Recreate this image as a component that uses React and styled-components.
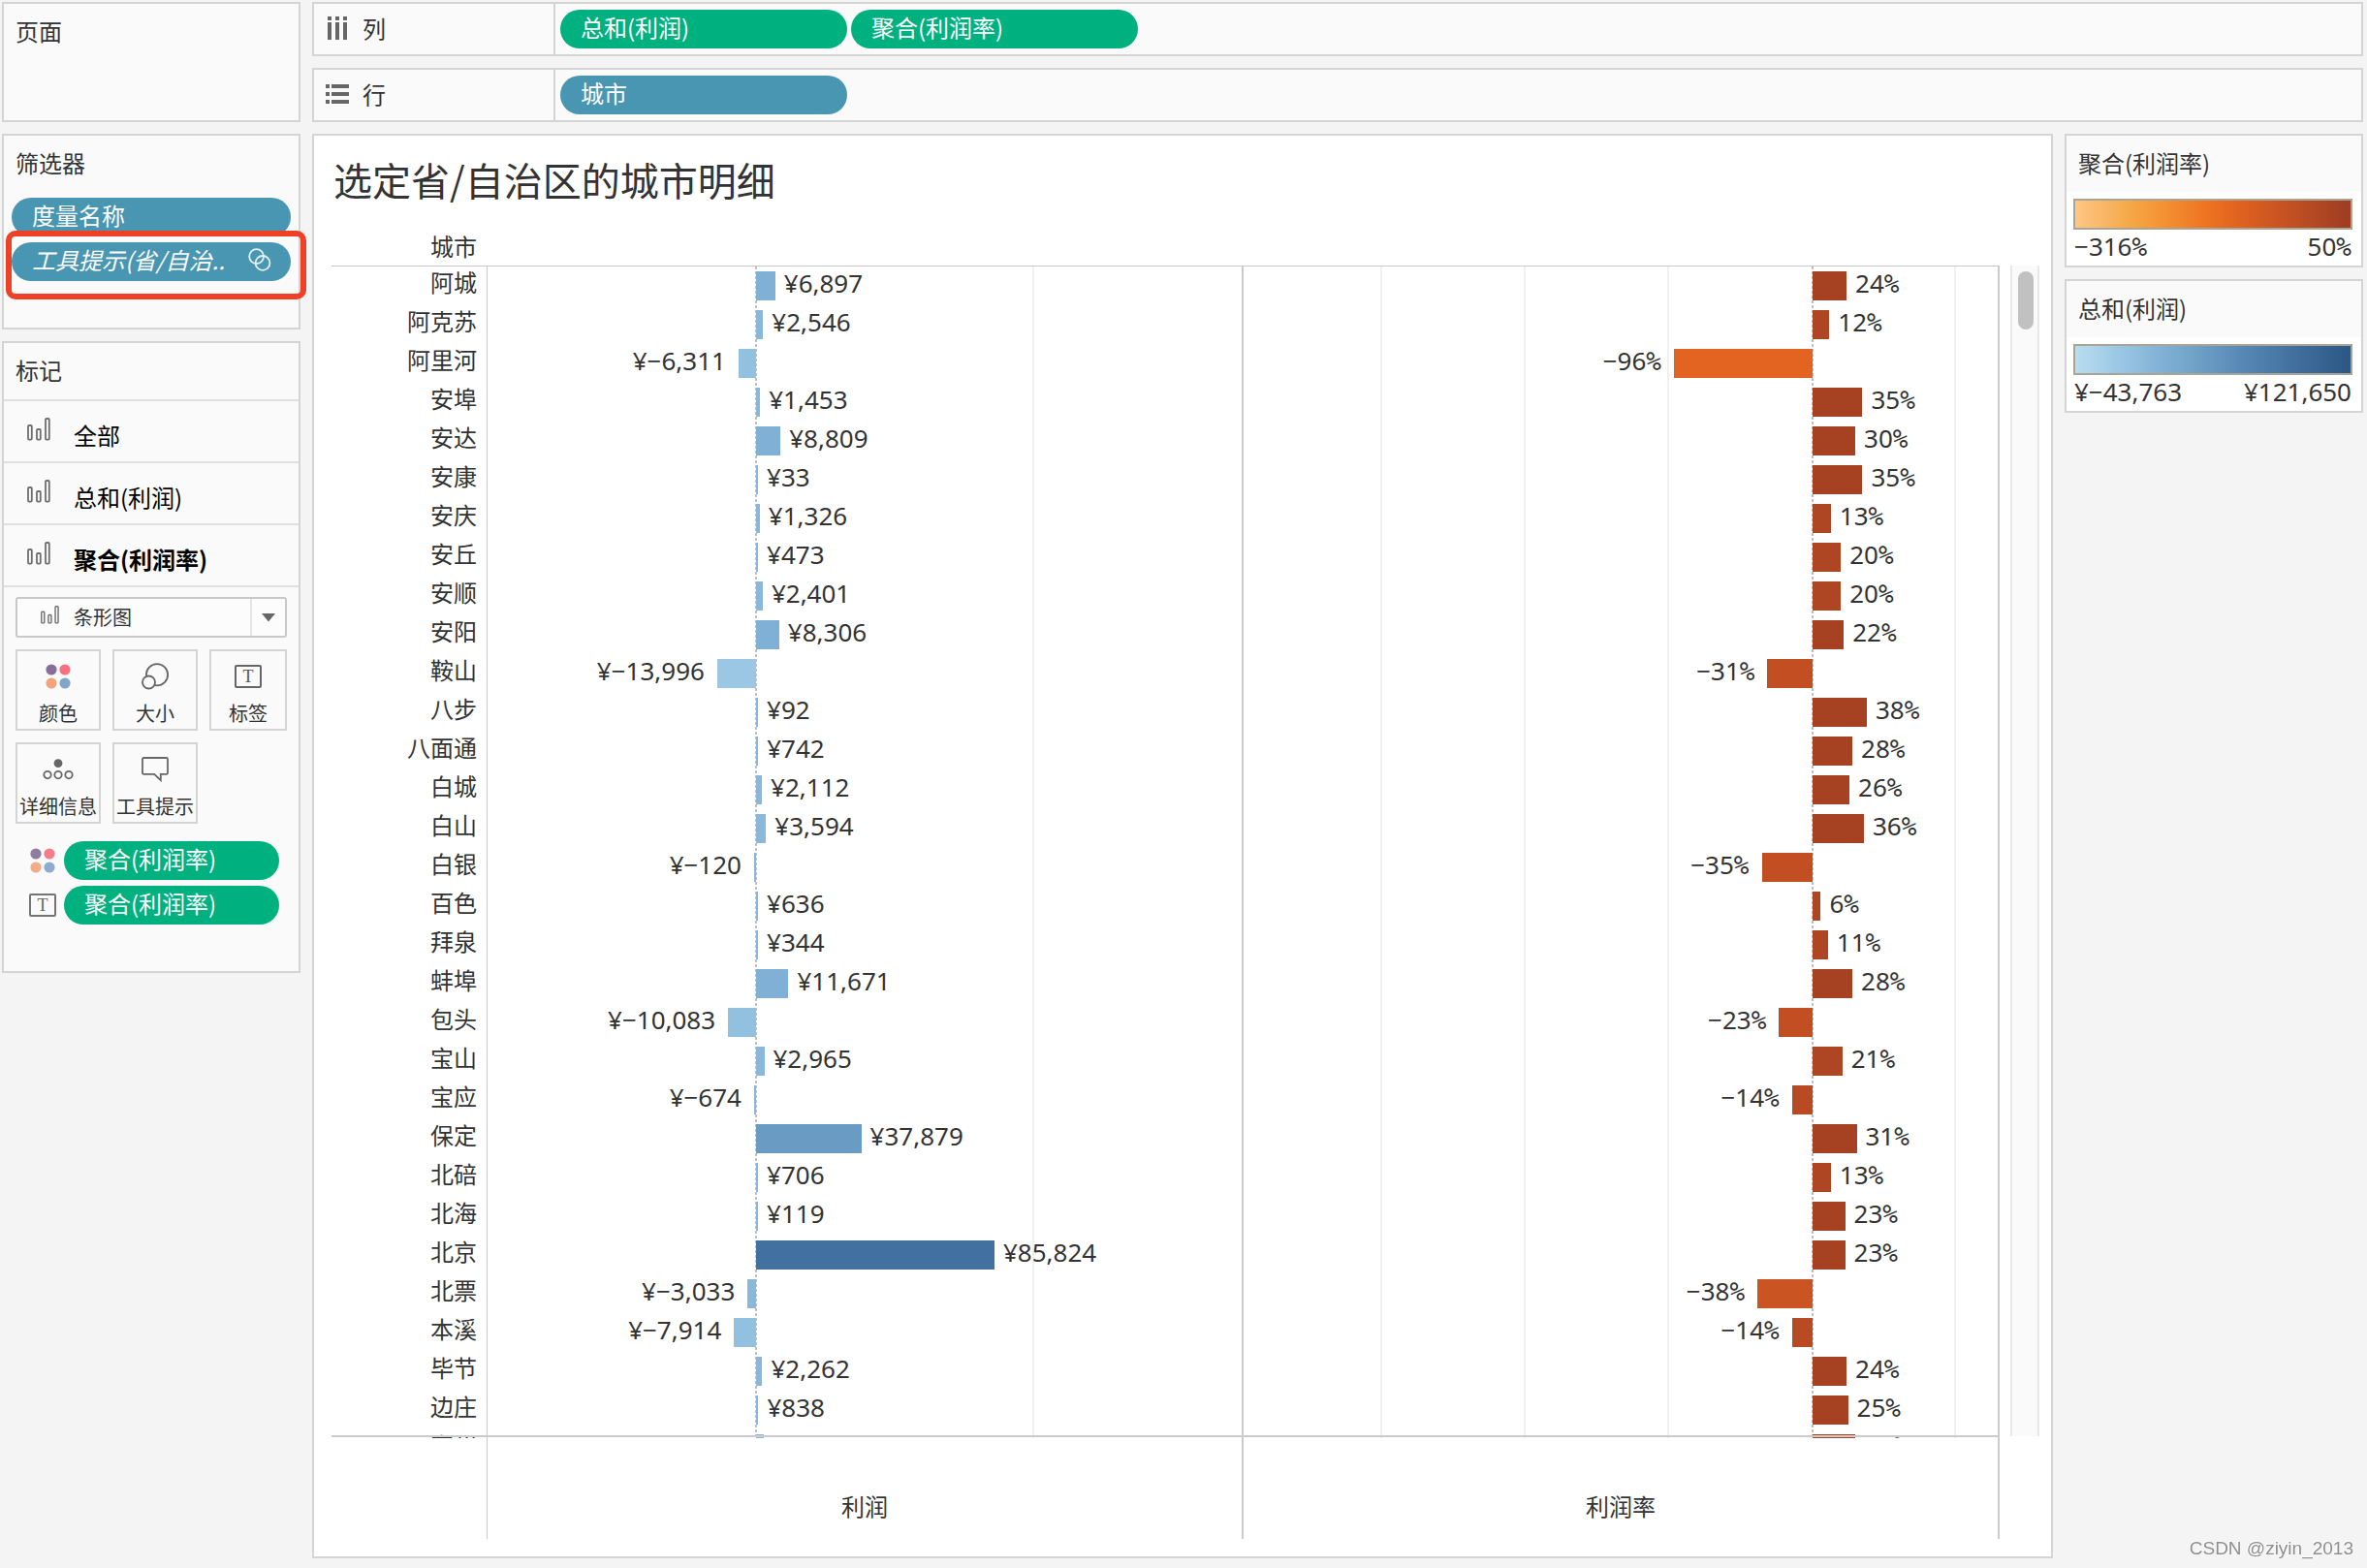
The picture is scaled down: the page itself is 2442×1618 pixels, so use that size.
import React, { useState } from 'react';
import styled, { createGlobalStyle } from 'styled-components';

const GREEN = '#00b180';
const BLUE = '#4996b2';

const ORANGE_RAMP = [
    '#ffc685', '#fcbe75', '#f9b665', '#f7ae54', '#f5a645', '#f59c3c', '#f49234',
    '#f2882d', '#f07e27', '#ee7422', '#e96b20', '#e36420', '#db5e20', '#d25921',
    '#ca5422', '#c14f22', '#b84b23', '#af4623', '#a64122', '#9e3d22',
];
const BLUE_RAMP = [
    '#b9ddf1', '#afd6ed', '#a5cfe9', '#9bc7e4', '#92c0df', '#89b8da', '#80b0d5',
    '#79aacf', '#72a3c9', '#6a9bc3', '#6394be', '#5b8cb8', '#5485b2', '#4e7fac',
    '#4878a6', '#42719f', '#3d6a98', '#376491', '#305d8a', '#2a5783',
];

// min / max is what the pane covers, base is where the bars start,
// low / high is the range of the colour legend
const PROFIT = { min: -96650, max: 174800, base: 0, low: -43763, high: 121650, ramp: BLUE_RAMP, grid: [100000] };
const RATIO = { min: -395, max: 129, base: 0.5, low: -316, high: 50, ramp: ORANGE_RAMP, grid: [-300, -200, -100, 100] };

const CITIES = [
    ['阿城', 6897, 24],
    ['阿克苏', 2546, 12],
    ['阿里河', -6311, -96],
    ['安埠', 1453, 35],
    ['安达', 8809, 30],
    ['安康', 33, 35],
    ['安庆', 1326, 13],
    ['安丘', 473, 20],
    ['安顺', 2401, 20],
    ['安阳', 8306, 22],
    ['鞍山', -13996, -31],
    ['八步', 92, 38],
    ['八面通', 742, 28],
    ['白城', 2112, 26],
    ['白山', 3594, 36],
    ['白银', -120, -35],
    ['百色', 636, 6],
    ['拜泉', 344, 11],
    ['蚌埠', 11671, 28],
    ['包头', -10083, -23],
    ['宝山', 2965, 21],
    ['宝应', -674, -14],
    ['保定', 37879, 31],
    ['北碚', 706, 13],
    ['北海', 119, 23],
    ['北京', 85824, 23],
    ['北票', -3033, -38],
    ['本溪', -7914, -14],
    ['毕节', 2262, 24],
    ['边庄', 838, 25],
    ['宾州', 2700, 30],
];

const position = (axis, value) => ((value - axis.min) / (axis.max - axis.min)) * 100;

const colorOf = (axis, value) => {
    const t = (value - axis.low) / (axis.high - axis.low);
    return axis.ramp[Math.round(t * (axis.ramp.length - 1))];
}

const gridOf = (axis) => {
    const lines = axis.grid.map(v => `linear-gradient(#f0f0f0, #f0f0f0) ${position(axis, v)}% 0 / 2px 100% no-repeat`);
    const zero = `repeating-linear-gradient(#bfbfbf 0 3px, transparent 3px 5px) ${position(axis, axis.base)}% 0 / 2px 100% no-repeat`;
    return [zero, ...lines].join(', ');
}

const money = (value) => `¥${value < 0 ? '−' : ''}${Math.abs(value).toLocaleString('en-US')}`;


const BarsIcon = ({ size = 24 }) => (
    <svg width={size} height={size} viewBox="0 0 24 24" fill="none" stroke="#6e6e6e" strokeWidth="1.8">
        <rect x="1" y="8" width="3.8" height="14.6" rx="1" />
        <rect x="10" y="12" width="3.8" height="10.6" rx="1" />
        <rect x="19" y="1" width="3.8" height="21.6" rx="1" />
    </svg>
)

const ColorIcon = () => (
    <svg width="26" height="26" viewBox="0 0 26 26">
        <circle cx="6" cy="6" r="5.6" fill="#866f98" />
        <circle cx="20" cy="6" r="5.6" fill="#f8707f" />
        <circle cx="6" cy="20" r="5.6" fill="#f2a57b" />
        <circle cx="20" cy="20" r="5.6" fill="#83a4cb" />
    </svg>
)

const SizeIcon = () => (
    <svg width="28" height="28" viewBox="0 0 28 28" fill="#fafafa" stroke="#666" strokeWidth="1.8">
        <circle cx="16" cy="12.2" r="11.1" />
        <circle cx="7.5" cy="20" r="6.5" />
    </svg>
)

const LabelIcon = () => (
    <svg width="28" height="24" viewBox="0 0 28 24">
        <rect x="1" y="1" width="26" height="22" rx="1" fill="none" stroke="#666" strokeWidth="2" />
        <text x="14" y="18" textAnchor="middle" fontFamily="Liberation Serif, serif" fontSize="18" fill="#555">T</text>
    </svg>
)

const DetailIcon = () => (
    <svg width="32" height="22" viewBox="0 0 32 22" fill="none" stroke="#666" strokeWidth="1.8">
        <circle cx="16" cy="4.6" r="4.4" fill="#666" stroke="none" />
        <circle cx="5" cy="16.6" r="3.7" />
        <circle cx="16" cy="16.6" r="3.7" />
        <circle cx="27" cy="16.6" r="3.7" />
    </svg>
)

const TooltipIcon = () => (
    <svg width="28" height="26" viewBox="0 0 28 26" fill="none" stroke="#666" strokeWidth="1.8">
        <path d="M2.4 1h23.2q1.4 0 1.4 1.4v14q0 1.4-1.4 1.4h-5.8v6.4l-6.6-6.4H2.4Q1 17.8 1 16.4v-14Q1 1 2.4 1z" />
    </svg>
)

const LinkedIcon = () => (
    <svg width="24" height="26" viewBox="0 0 24 26" fill="none" stroke="#e4f0f4" strokeWidth="1.8">
        <circle cx="8.6" cy="9.6" r="7.4" />
        <circle cx="15" cy="16.4" r="7.4" />
    </svg>
)

const ColumnsIcon = () => (
    <svg width="24" height="24" viewBox="0 0 24 24" fill="#666">
        <path d="M2 0h4v4H2zM10 0h4v4h-4zM18 0h4v4h-4zM2 6h4v18H2zM10 6h4v18h-4zM18 6h4v18h-4z" />
    </svg>
)

const RowsIcon = () => (
    <svg width="24" height="24" viewBox="0 0 24 24" fill="#666">
        <path d="M0 2h4v4H0zM0 10h4v4H0zM0 18h4v4H0zM6 2h18v4H6zM6 10h18v4H6zM6 18h18v4H6z" />
    </svg>
)


const Pane = ({ axis, value, children }) => {
    const origin = position(axis, axis.base);
    const negative = value < 0;
    // bar length as a share of the half of the pane that it lies in
    const side = negative ? origin : 100 - origin;
    const length = Math.abs(position(axis, value) - origin) / side * 100;

    return (
        <PaneCell $grid={gridOf(axis)}>
            <Track>
                <Side $negative={negative} style={{ width: `${side}%` }}>
                    <Bar style={{ width: `${length}%`, background: colorOf(axis, value) }} />
                    <Value>{children}</Value>
                </Side>
            </Track>
        </PaneCell>
    )
}

const Legend = ({ title, ramp, low, high }) => (
    <Panel>
        <PanelTitle>{title}</PanelTitle>
        <LegendBody>
            <Ramp $colors={ramp} />
            <LegendRange>
                <span>{low}</span>
                <span>{high}</span>
            </LegendRange>
        </LegendBody>
    </Panel>
)

const Percent = ({ value }) => <>{value < 0 ? '−' : ''}{Math.abs(value)}<Sign>%</Sign></>


const App = () => {
    const [card, setCard] = useState('聚合(利润率)');

    return (<>
        <GlobalStyle />
        <Page>
            <Sidebar>
                <Panel $height={124}>
                    <PanelTitle>页面</PanelTitle>
                </Panel>
                <Panel $height={202}>
                    <PanelTitle>筛选器</PanelTitle>
                    <FilterList>
                        <Pill $color={BLUE}>度量名称</Pill>
                        <Pill $color={BLUE} $italic>
                            工具提示(省/自治..
                            <LinkedIcon />
                        </Pill>
                        <Highlight />
                    </FilterList>
                </Panel>
                <Panel>
                    <PanelTitle>标记</PanelTitle>
                    {['全部', '总和(利润)', '聚合(利润率)'].map(name => (
                        <CardRow key={name} $active={name === card} onClick={() => setCard(name)}>
                            <BarsIcon />
                            <CardName>{name}</CardName>
                        </CardRow>
                    ))}
                    <MarksBody>
                        <MarkType>
                            <MarkTypeIcon><BarsIcon size={19} /></MarkTypeIcon>
                            <MarkSelect aria-label="标记类型" defaultValue="条形图">
                                <option>条形图</option>
                            </MarkSelect>
                            <MarkArrow>
                                <svg width="14" height="9" viewBox="0 0 14 9" fill="#666"><path d="M0 0h14L7 8.5z" /></svg>
                            </MarkArrow>
                        </MarkType>
                        <MarkGrid>
                            <MarkButton><MarkIcon><ColorIcon /></MarkIcon>颜色</MarkButton>
                            <MarkButton><MarkIcon><SizeIcon /></MarkIcon>大小</MarkButton>
                            <MarkButton><MarkIcon><LabelIcon /></MarkIcon>标签</MarkButton>
                            <MarkButton><MarkIcon><DetailIcon /></MarkIcon>详细信息</MarkButton>
                            <MarkButton><MarkIcon><TooltipIcon /></MarkIcon>工具提示</MarkButton>
                        </MarkGrid>
                        <Encodings>
                            <Encoding>
                                <ColorIcon />
                                <Pill $color={GREEN}>聚合(利润率)</Pill>
                            </Encoding>
                            <Encoding>
                                <LabelIcon />
                                <Pill $color={GREEN}>聚合(利润率)</Pill>
                            </Encoding>
                        </Encodings>
                    </MarksBody>
                </Panel>
            </Sidebar>

            <Workspace>
                <Shelf>
                    <ShelfName><ColumnsIcon />列</ShelfName>
                    <ShelfPills>
                        <Pill $color={GREEN}>总和(利润)</Pill>
                        <Pill $color={GREEN}>聚合(利润率)</Pill>
                    </ShelfPills>
                </Shelf>
                <Shelf>
                    <ShelfName><RowsIcon />行</ShelfName>
                    <ShelfPills>
                        <Pill $color={BLUE}>城市</Pill>
                    </ShelfPills>
                </Shelf>

                <Content>
                    <Sheet>
                        <SheetTitle>选定省/自治区的城市明细</SheetTitle>
                        <FieldHeader>城市</FieldHeader>
                        <Plot>
                            <Viewport>
                                <Table>
                                    <colgroup>
                                        <CityCol />
                                        <col />
                                        <col />
                                    </colgroup>
                                    <tbody>
                                        {CITIES.map(([city, profit, ratio]) => (
                                            <tr key={city}>
                                                <City scope="row">{city}</City>
                                                <Pane axis={PROFIT} value={profit}>{money(profit)}</Pane>
                                                <Pane axis={RATIO} value={ratio}><Percent value={ratio} /></Pane>
                                            </tr>
                                        ))}
                                    </tbody>
                                </Table>
                            </Viewport>
                            <Scrollbar><Thumb /></Scrollbar>
                        </Plot>
                        <Axes>
                            <AxisCorner />
                            <AxisTitle>利润</AxisTitle>
                            <AxisTitle>利润率</AxisTitle>
                        </Axes>
                    </Sheet>
                    <Legends>
                        <Legend title="聚合(利润率)" ramp={ORANGE_RAMP} low={<Percent value={-316} />} high={<Percent value={50} />} />
                        <Legend title="总和(利润)" ramp={BLUE_RAMP} low={money(-43763)} high={money(121650)} />
                    </Legends>
                </Content>
            </Workspace>
        </Page>
        <Watermark>CSDN @ziyin_2013</Watermark>
    </>)
}


export default App;

const GlobalStyle = createGlobalStyle`
* {
    box-sizing: border-box;
}
body {
    margin: 0;
    background: #f4f4f4;
    color: #333;
    font-family: 'Noto Sans CJK SC', sans-serif;
    font-size: 24px;
    line-height: 32px;
}
button, select {
    font: inherit;
    color: inherit;
}
svg {
    display: block;
    flex: none;
}
`
const Page = styled.div`
display: flex;
gap: 12px;
height: 100vh;
padding: 2px 4px 10px 2px;
`
const Sidebar = styled.aside`
display: flex;
flex-direction: column;
flex: none;
gap: 12px;
width: 308px;
`
const Workspace = styled.main`
display: flex;
flex-direction: column;
flex: 1;
gap: 12px;
min-width: 0;
`
const Panel = styled.section`
min-height: ${p => p.$height ? `${p.$height}px` : '0'};
border: 2px solid #d4d4d4;
background: #fafafa;
`
const PanelTitle = styled.h2`
margin: 0;
padding: 12px 12px 14px;
font-size: 24px;
font-weight: 400;
line-height: 32px;
`
const Pill = styled.button`
display: flex;
align-items: center;
justify-content: space-between;
height: 40px;
padding: 0 20px 4px 21px;
border: none;
border-radius: 20px;
background: ${p => p.$color};
color: white;
font-style: ${p => p.$italic ? 'italic' : 'normal'};
text-align: left;
white-space: nowrap;
`
const FilterList = styled.div`
position: relative;
display: flex;
flex-direction: column;
gap: 6px;
padding: 6px 8px;
`
// red frame drawn over the second filter
const Highlight = styled.div`
position: absolute;
top: 40px;
left: 2px;
right: -8px;
height: 71px;
border: 6px solid #ee4126;
border-radius: 10px;
pointer-events: none;
`
const CardRow = styled.button`
display: flex;
align-items: center;
gap: 24px;
width: 100%;
height: 64px;
padding: 0 24px 4px;
border: none;
border-top: 2px solid #e0e0e0;
background: none;
color: black;
font-weight: ${p => p.$active ? 700 : 400};
`
const CardName = styled.span`
padding-top: 12px;
`
const MarksBody = styled.div`
padding: 10px 12px 48px;
border-top: 2px solid #e0e0e0;
`
const MarkType = styled.div`
position: relative;
width: 280px;
`
const MarkSelect = styled.select`
width: 100%;
height: 42px;
padding: 0 40px 0 58px;
border: 2px solid #c8c8c8;
border-radius: 3px;
background: #fcfcfc;
font-size: 20px;
appearance: none;
`
const MarkTypeIcon = styled.span`
position: absolute;
top: 9px;
left: 26px;
pointer-events: none;
`
const MarkArrow = styled.span`
position: absolute;
top: 2px;
bottom: 2px;
right: 2px;
display: grid;
place-items: center;
width: 36px;
border-left: 2px solid #e4e4e4;
pointer-events: none;
`
const MarkGrid = styled.div`
display: grid;
grid-template-columns: 88px 88px 80px;
gap: 12px;
margin-top: 12px;
`
const MarkButton = styled.button`
display: flex;
flex-direction: column;
align-items: center;
height: 84px;
padding: 0;
border: 2px solid #d4d4d4;
background: #fafafa;
font-size: 20px;
line-height: 26px;
white-space: nowrap;
`
const MarkIcon = styled.span`
display: grid;
place-items: center;
height: 51px;
`
const Encodings = styled.div`
display: flex;
flex-direction: column;
gap: 6px;
margin-top: 18px;
`
const Encoding = styled.div`
display: grid;
grid-template-columns: 28px 222px;
gap: 8px;
align-items: center;
justify-items: center;
padding-left: 14px;
svg {
    opacity: 0.9;
}
${Pill} {
    width: 100%;
}
`
const Shelf = styled.section`
display: flex;
flex: none;
height: 56px;
border: 2px solid #d4d4d4;
background: #fafafa;
`
const ShelfName = styled.div`
display: flex;
align-items: center;
gap: 14px;
width: 249px;
padding: 0 12px 3px;
border-right: 2px solid #d4d4d4;
`
const ShelfPills = styled.div`
display: flex;
gap: 4px;
padding: 6px 5px;
${Pill} {
    width: 296px;
}
`
const Content = styled.div`
display: flex;
flex: 1;
gap: 12px;
min-height: 0;
`
const Sheet = styled.section`
display: flex;
flex-direction: column;
flex: 1;
min-width: 0;
padding: 18px 12px 18px 18px;
border: 2px solid #d4d4d4;
background: white;
`
const SheetTitle = styled.h1`
margin: 0;
padding-left: 2px;
font-size: 40px;
font-weight: 400;
line-height: 54px;
`
const FieldHeader = styled.div`
width: 150px;
margin-top: 26px;
padding-bottom: 4px;
text-align: right;
`
const Plot = styled.div`
display: flex;
flex: 1;
gap: 11px;
min-height: 0;
`
const Viewport = styled.div`
flex: 1;
min-width: 0;
overflow: hidden;
border-top: 1px solid #c8c8c8;
`
const Table = styled.table`
width: 100%;
table-layout: fixed;
border-spacing: 0;
`
const CityCol = styled.col`
width: 161px;
`
const City = styled.th`
height: 40px;
padding: 0 10px 8px 0;
border-right: 1px solid #c8c8c8;
font-weight: 400;
text-align: right;
`
const PaneCell = styled.td`
padding: 0;
border-right: 2px solid #cbcbcb;
background: ${p => p.$grid};
background-origin: padding-box;
`
const Track = styled.div`
display: flex;
height: 40px;
`
const Side = styled.div`
display: flex;
align-items: center;
flex-direction: ${p => p.$negative ? 'row-reverse' : 'row'};
gap: ${p => p.$negative ? '13px' : '9px'};
margin-left: ${p => p.$negative ? '0' : 'auto'};
`
const Bar = styled.div`
flex: none;
min-width: 2px;
height: 30px;
`
const Value = styled.span`
padding-bottom: 6px;
font-family: 'Noto Sans', sans-serif;
font-size: 26px;
`
const Sign = styled.span`
font-family: 'DejaVu Sans Mono', monospace;
font-size: 26px;
line-height: 1;
`
const Scrollbar = styled.div`
width: 30px;
margin-bottom: 2px;
padding: 6px;
border: solid #e8e8e8;
border-width: 0 2px;
background: #fafafa;
`
const Thumb = styled.div`
width: 16px;
height: 60px;
border-radius: 8px;
background: #c1c1c1;
`
const Axes = styled.div`
position: relative;
display: grid;
grid-template-columns: 161px 1fr 1fr;
height: 107px;
margin: -3px 41px 0 0;
border-top: 2px solid #cbcbcb;
`
const AxisCorner = styled.div`
border-right: 1px solid #c8c8c8;
`
const AxisTitle = styled.div`
padding-top: 55px;
border-right: 2px solid #cbcbcb;
text-align: center;
`
const Legends = styled.aside`
display: flex;
flex-direction: column;
flex: none;
gap: 12px;
width: 308px;
`
const LegendBody = styled.div`
padding: 7px 9px 3px 7px;
background: white;
`
const Ramp = styled.div`
height: 32px;
border: 2px solid #a9a594;
background: linear-gradient(to right, ${p => p.$colors.join(', ')});
`
const LegendRange = styled.div`
display: flex;
justify-content: space-between;
height: 34px;
padding: 1px 1px 0;
font-family: 'Noto Sans', sans-serif;
font-size: 26px;
`
const Watermark = styled.div`
position: fixed;
right: 14px;
bottom: 4px;
color: #8e8e8e;
font-family: 'Liberation Sans', sans-serif;
font-size: 19px;
text-shadow: -1px -1px 0 white;
`
